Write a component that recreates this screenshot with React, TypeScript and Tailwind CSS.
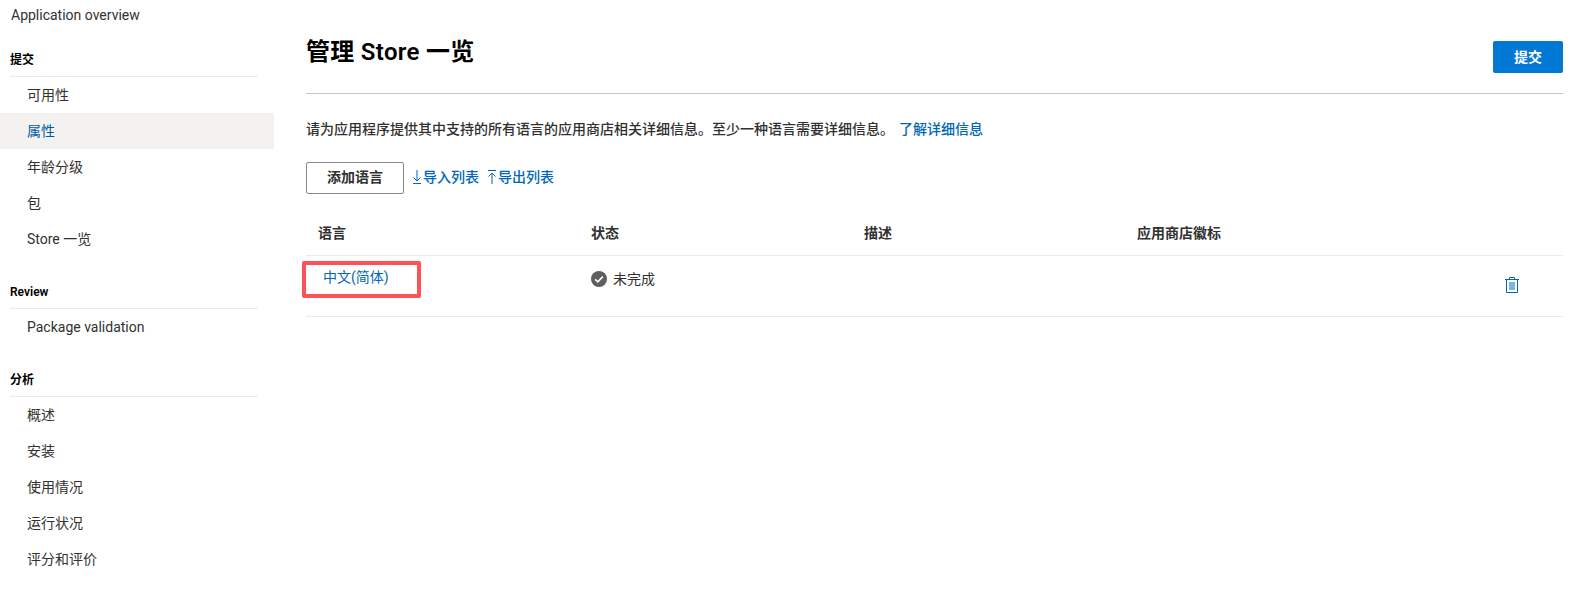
const sections = [
  { title: '提交', items: ['可用性', '属性', '年龄分级', '包', 'Store 一览'] },
  { title: 'Review', items: ['Package validation'] },
  { title: '分析', items: ['概述', '安装', '使用情况', '运行状况', '评分和评价'] },
];

const columns = ['语言', '状态', '描述', '应用商店徽标'];

function Sidebar() {
  return (
    <aside className="w-[274px] shrink-0">
      <div className="h-[25px] pl-[11px] pt-[5px] text-[14px] leading-[20px] text-[#323130]">Application overview</div>
      {sections.map((section) => (
        <div key={section.title}>
          <div className="ml-[10px] mr-[16px] flex h-[52px] items-end border-b border-[#edebe9] pb-[7px] text-[12px] font-semibold leading-[18px] text-black">
            {section.title}
          </div>
          <ul>
            {section.items.map((item) => (
              <li
                key={item}
                className={`flex h-9 items-center pl-[27px] text-[14px] ${
                  item === '属性' ? 'bg-[#f3f2f1] text-[#005a9e]' : 'text-[#323130]'
                }`}
              >
                {item}
              </li>
            ))}
          </ul>
        </div>
      ))}
    </aside>
  );
}

function TrashIcon() {
  return (
    <svg width="14" height="16" viewBox="0 0 14 16" fill="none" stroke="#0067b8" strokeWidth="1">
      <path d="M0 2.5h14M4.5 2.5v-2h5v2M1.5 2.5v13h11v-13M5 5v8M7 5v8M9 5v8" />
    </svg>
  );
}

function StatusIcon() {
  return (
    <svg width="16" height="16" viewBox="0 0 16 16">
      <circle cx="8" cy="8" r="8" fill="#605e5c" />
      <path d="M4.2 8.4l2.6 2.4 5-5.2" fill="none" stroke="#fff" strokeWidth="1.6" />
    </svg>
  );
}

function ImportIcon() {
  return (
    <svg width="12" height="14" viewBox="0 0 12 14" fill="none" stroke="#0067b8" strokeWidth="1">
      <path d="M6 0v11M2.5 7.5L6 11l3.5-3.5M2 13.5h8" />
    </svg>
  );
}

function ExportIcon() {
  return (
    <svg width="12" height="14" viewBox="0 0 12 14" fill="none" stroke="#0067b8" strokeWidth="1">
      <path d="M2 .5h8M6 3v11M2.5 6.5L6 3l3.5 3.5" />
    </svg>
  );
}

export default function App() {
  return (
    <div className="flex h-[606px] w-[1571px] overflow-hidden bg-white font-['Roboto','Noto_Sans_CJK_SC',sans-serif]">
      <Sidebar />
      <main className="flex-1 pl-[32px] pr-[8px]">
        <div className="flex h-[94px] items-start justify-between border-b border-[#c4c4c4]">
          <h1 className="mt-[34px] text-[24px] font-semibold leading-[36px] tracking-[0.3px] text-black">管理 Store 一览</h1>
          <button className="mt-[41px] h-8 w-[70px] rounded-[2px] bg-[#0078d4] text-[14px] font-semibold text-white">提交</button>
        </div>

        <p className="mt-[25px] text-[14px] font-medium leading-[20px] text-[#323130]">
          请为应用程序提供其中支持的所有语言的应用商店相关详细信息。至少一种语言需要详细信息。
          <a className="ml-[5px] text-[#0067b8]">了解详细信息</a>
        </p>

        <div className="mt-[23px] flex items-start">
          <button className="h-[32px] w-[98px] rounded-[2px] border border-[#8a8886] pb-[2px] text-[14px] font-semibold text-[#323130]">添加语言</button>
          <a className="ml-[7px] mt-[5px] flex items-center text-[14px] font-medium leading-[20px] text-[#0067b8]">
            <ImportIcon />
            导入列表
          </a>
          <a className="ml-[7px] mt-[5px] flex items-center text-[14px] font-medium leading-[20px] text-[#0067b8]">
            <ExportIcon />
            导出列表
          </a>
        </div>

        <div className="mt-[22px] grid h-[40px] grid-cols-[273px_273px_273px_1fr] items-center border-b border-[#edebe9] pb-[4px] pl-[12px] text-[14px] font-semibold text-[#323130]">
          {columns.map((col) => (
            <div key={col}>{col}</div>
          ))}
        </div>

        <div className="relative grid h-[61px] grid-cols-[273px_273px_273px_1fr] items-center border-b border-[#edebe9] pl-[12px] text-[14px]">
          <a className="-mt-[18px] pl-[5px] text-[#0067b8]">中文(简体)</a>
          <div className="-mt-[14px] flex items-center gap-[6px] text-[#323130]">
            <StatusIcon />
            未完成
          </div>
          <div />
          <div className="-mt-[2px] flex justify-end pr-[44px]">
            <TrashIcon />
          </div>
          {/* red callout drawn over the first cell */}
          <div className="absolute left-[-4px] top-[5px] h-[37px] w-[119px] rounded-[2px] border-[4px] border-[#ff5257]" />
        </div>
      </main>
    </div>
  );
}
